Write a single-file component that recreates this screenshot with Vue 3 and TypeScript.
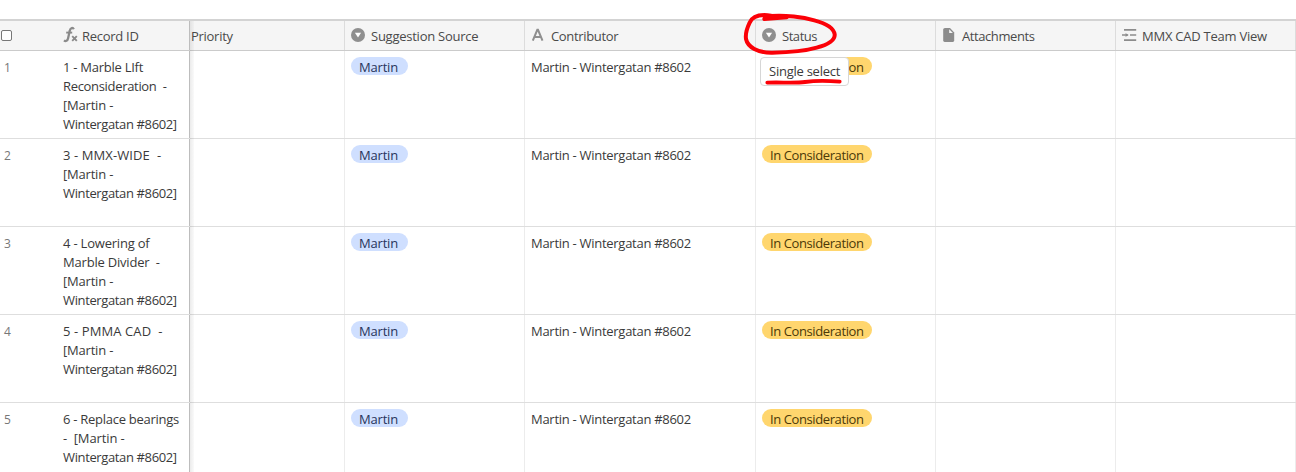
<script setup lang="ts">
interface Column {
  label: string
  icon: 'formula' | 'none' | 'select' | 'text' | 'file' | 'lookup'
  spacing: number
}

interface TextLine {
  text: string
  spacing: number
}

interface Row {
  index: number
  lines: TextLine[]
}

const columns: Column[] = [
  { label: 'Priority', icon: 'none', spacing: -0.28 },
  { label: 'Suggestion Source', icon: 'select', spacing: -0.25 },
  { label: 'Contributor', icon: 'text', spacing: -0.34 },
  { label: 'Status', icon: 'select', spacing: -0.45 },
  { label: 'Attachments', icon: 'file', spacing: -0.42 },
  { label: 'MMX CAD Team View', icon: 'lookup', spacing: -0.24 },
]

const line = (text: string, spacing = -0.2): TextLine => ({ text, spacing })
const signature = line('Wintergatan #8602]', -0.37)

const rows: Row[] = [
  { index: 1, lines: [line('1 - Marble LIft', -0.26), line('Reconsideration  -', -0.32), line('[Martin -'), signature] },
  { index: 2, lines: [line('3 - MMX-WIDE  -', 0.1), line('[Martin -'), signature] },
  { index: 3, lines: [line('4 - Lowering of', -0.2), line('Marble Divider  -', -0.2), line('[Martin -'), signature] },
  { index: 4, lines: [line('5 - PMMA CAD  -', 0.1), line('[Martin -'), signature] },
  { index: 5, lines: [line('6 - Replace bearings', -0.27), line('-  [Martin -', -0.1), signature] },
]
</script>

<template>
  <div class="sheet">
    <div class="row header">
      <div class="cell primary">
        <span class="checkbox"></span>
        <svg class="fx" width="16" height="18" viewBox="0 0 16 18" fill="none" stroke="#8a8a8a">
          <path d="M10.8 3.2C9.9 1.3 7.4 1.5 6.8 4.6L5.1 12.2C4.5 15 2.6 15.7 1 14.4" stroke-width="2.3" />
          <path d="M3.2 6.6H9.2" stroke-width="1.9" />
          <path d="M9.2 10.2L13.8 14.8M13.8 10.2L9.2 14.8" stroke-width="1.9" />
        </svg>
        <span class="label">Record ID</span>
      </div>
      <div v-for="col in columns" :key="col.label" class="cell head" :class="col.icon">
        <svg v-if="col.icon === 'select'" class="icon" width="14" height="14" viewBox="0 0 14 14">
          <circle cx="7" cy="7" r="7" fill="#8f8f8f" />
          <path d="M3.9 4.8H10.1L7 9.6Z" fill="#fff" />
        </svg>
        <svg v-else-if="col.icon === 'text'" class="icon" width="14" height="14" viewBox="0 0 14 14" fill="none" stroke="#8f8f8f" stroke-width="2">
          <path d="M1.8 12.6L6.3 1.8H7L11.5 12.6M3.6 9H9.7" />
        </svg>
        <svg v-else-if="col.icon === 'file'" class="icon" width="14" height="14" viewBox="0 0 14 14">
          <path d="M3 0H8L12.2 4.4V12.6Q12.2 14 10.8 14H2.6Q1.2 14 1.2 12.6V1.6Q1.2 0 3 0Z" fill="#8c8c8c" />
          <path d="M7.2 1.3V5H10.9Z" fill="#f5f5f5" />
        </svg>
        <svg v-else-if="col.icon === 'lookup'" class="icon" width="15" height="14" viewBox="0 0 15 14" fill="none" stroke="#8c8c8c" stroke-width="1.7">
          <path d="M2 1.9H14.2M8 7H14.2M2 12.1H14.2M0 7H6.2" />
          <path d="M3.6 4.9L6.2 7L3.6 9.1Z" fill="#8c8c8c" stroke="none" />
        </svg>
        <span class="label" :style="{ letterSpacing: col.spacing + 'px' }">{{ col.label }}</span>
      </div>
    </div>

    <div v-for="row in rows" :key="row.index" class="row body">
      <div class="cell primary">
        <span class="index">{{ row.index }}</span>
        <div class="record">
          <div v-for="(item, i) in row.lines" :key="i" :style="{ letterSpacing: item.spacing + 'px' }">{{ item.text }}</div>
        </div>
      </div>
      <div class="cell"></div>
      <div class="cell"><span class="pill blue">Martin</span></div>
      <div class="cell"><span class="contributor">Martin - Wintergatan #8602</span></div>
      <div class="cell"><span class="pill yellow">In Consideration</span></div>
      <div class="cell"></div>
      <div class="cell"></div>
    </div>

    <div class="freeze-shadow"></div>
    <div class="tooltip">Single select</div>
    <svg class="marker" width="140" height="90" viewBox="0 0 420 270" fill="none" stroke="#fb0007" stroke-linecap="round" stroke-linejoin="round">
      <path d="M155 37L88 42Q92 32 108 32C75 27 52 35 44 53C37 68 30 82 33 102C38 126 68 144 112 143C165 142 210 138 245 128C280 119 301 107 299 88C296 66 265 53 238 46C205 37 150 29 108 33" stroke-width="12" />
      <path d="M97 233C130 231 180 235 210 231S275 227 314 230" stroke-width="11.5" />
    </svg>
  </div>
</template>

<style>
html,
body {
  background: #fff;
  overflow: hidden;
}
</style>

<style scoped>
.sheet {
  position: relative;
  box-sizing: border-box;
  width: 1296px;
  height: 472px;
  padding-top: 19px;
  overflow: hidden;
  background: #fff;
  color: #3a3a3a;
  font: 13px/19px "Open Sans", "Noto Sans", sans-serif;
}

.row {
  display: grid;
  grid-template-columns: 190px 155px 180px 231px 180px 180px 180px;
  box-sizing: border-box;
}

.header {
  height: 32px;
  border-top: 2px solid #d3d3d3;
  border-bottom: 1px solid #cbcbcb;
  background: #f5f5f5;
}

.body {
  height: 88px;
  border-bottom: 1px solid #dedede;
}

.cell {
  display: flex;
  align-items: flex-start;
  box-sizing: border-box;
  min-width: 0;
  padding: 7px 6px 0;
  border-right: 1px solid #ececec;
  white-space: pre;
}

.header .cell {
  align-items: center;
  padding-top: 1px;
  border-right-color: #dcdcdc;
}

.cell.primary,
.header .cell.primary {
  padding-left: 0;
  padding-right: 0;
  border-right-color: #bdbdbd;
}

.header .none {
  padding-left: 1px;
}

.label {
  color: #4a4a4a;
  letter-spacing: -0.28px;
}

.checkbox {
  box-sizing: border-box;
  width: 11px;
  height: 11px;
  margin: 0 51px 2px 1px;
  border: 1px solid #777;
  border-radius: 2px;
  background: #fff;
}

.fx {
  margin: 0 3px 2px 0;
}

.icon {
  flex: none;
  margin-right: 6px;
  margin-bottom: 2px;
}

.lookup .icon {
  margin-right: 5px;
}

.index {
  width: 59px;
  padding-left: 4px;
  color: #777;
  font-size: 12px;
}

.contributor {
  letter-spacing: -0.28px;
}

.pill {
  box-sizing: border-box;
  height: 18px;
  margin-top: -1px;
  padding: 0 8px;
  border-radius: 9px;
  line-height: 21px;
}

.blue {
  width: 57px;
  background: #cfdfff;
  color: #28345c;
  letter-spacing: -0.2px;
}

.yellow {
  width: 110px;
  background: #ffd66e;
  color: #4b3908;
  letter-spacing: -0.4px;
}

.freeze-shadow {
  position: absolute;
  top: 21px;
  bottom: 0;
  left: 190px;
  width: 4px;
  background: linear-gradient(to right, rgba(0, 0, 0, 0.08), rgba(0, 0, 0, 0.02));
}

.tooltip {
  position: absolute;
  left: 760px;
  top: 57px;
  box-sizing: border-box;
  width: 89px;
  height: 29px;
  padding: 4px 0 0 8px;
  border: 1px solid #d6d6d6;
  border-radius: 4px;
  background: #fff;
  letter-spacing: -0.25px;
  white-space: nowrap;
}

.marker {
  position: absolute;
  left: 735px;
  top: 5px;
}
</style>
